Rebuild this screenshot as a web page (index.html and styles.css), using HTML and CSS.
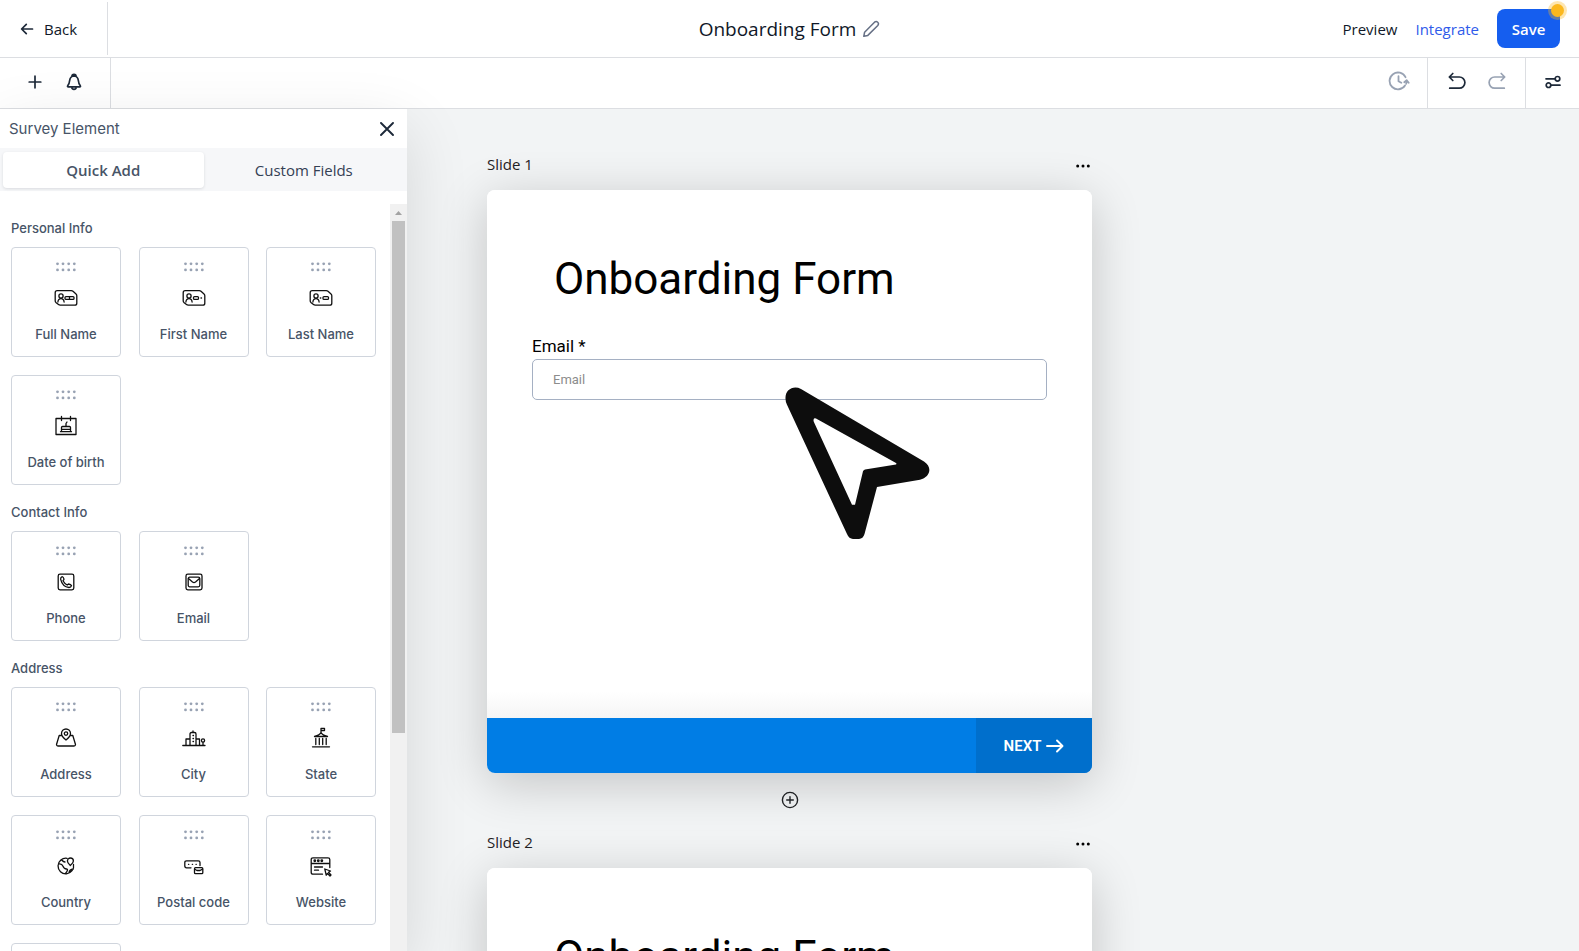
FILE: index.html
```html
<!DOCTYPE html>
<html lang="en">
<head>
<meta charset="utf-8">
<meta name="viewport" content="width=device-width, initial-scale=1">
<title>Onboarding Form</title>
<link rel="stylesheet" href="styles.css">
</head>
<body>
<svg class="sprite" aria-hidden="true">
  <symbol id="grip" viewBox="0 0 20 10">
    <g fill="#98a2b3"><circle cx="1.5" cy="1.8" r="1.4"/><circle cx="7" cy="1.8" r="1.4"/><circle cx="12.7" cy="1.8" r="1.4"/><circle cx="18.3" cy="1.8" r="1.4"/><circle cx="1.5" cy="7.9" r="1.4"/><circle cx="7" cy="7.9" r="1.4"/><circle cx="12.7" cy="7.9" r="1.4"/><circle cx="18.3" cy="7.9" r="1.4"/></g>
  </symbol>
  <symbol id="dots" viewBox="0 0 14 4">
    <circle cx="1.7" cy="2" r="1.5"/><circle cx="7" cy="2" r="1.5"/><circle cx="12.3" cy="2" r="1.5"/>
  </symbol>
  <symbol id="card-person" viewBox="0 0 24 24">
    <path d="M3.2 4.7H17.3Q18.3 4.7 19 5.3L22 8Q22.8 8.700 22.8 9.700V17.200Q22.800 19.200 20.800 19.200H6.200Q5.200 19.200 4.500 18.600L1.900 16.400Q1.200 15.700 1.200 14.700V6.700Q1.200 4.700 3.200 4.700Z"/>
    <circle cx="7" cy="10" r="2.100"/><path d="M3.900 16Q4.200 12.600 7 12.600T10.100 16"/>
  </symbol>
</svg>

<header class="topbar">
  <div class="topbar-left">
    <button class="back" type="button">
      <svg width="14" height="14" viewBox="0 0 14 14" class="line"><path d="M12.500 7H1.800M6.300 2.300 1.600 7l4.700 4.700"/></svg>
      Back
    </button>
  </div>
  <div class="title">
    <h1>Onboarding Form</h1>
    <button class="icon-btn" type="button" aria-label="Rename">
      <svg width="18" height="18" viewBox="0 0 18 18" fill="none" stroke="#667085" stroke-width="1.500" stroke-linejoin="round"><path d="M1.800 16.300 2.600 12.200 12.500 2.200Q14.200.9 15.700 2.200T15.800 5.500L5.800 15.400Z"/></svg>
    </button>
  </div>
  <div class="topbar-right">
    <button class="text-btn" type="button">Preview</button>
    <button class="text-btn text-btn-blue" type="button">Integrate</button>
    <button class="save" type="button">Save<span class="save-dot"></span></button>
  </div>
</header>

<nav class="toolbar" aria-label="Tools">
  <div class="tools-left">
    <button class="icon-btn" type="button" aria-label="Add">
      <svg width="14" height="14" viewBox="0 0 14 14" class="line"><path d="M7 1.200v11.600M1.200 7h11.600"/></svg>
    </button>
    <button class="icon-btn" type="button" aria-label="Notifications">
      <svg width="16" height="18" viewBox="0 0 16 18" class="line"><path d="M5.900 3.500Q5.900 1.300 8 1.300T10.100 3.500M8 3Q4.200 3.200 3.700 7.300 3.400 10.700 1.700 12.800 1.200 13.900 2.300 13.900H13.700Q14.800 13.900 14.300 12.800 12.600 10.700 12.300 7.300 11.800 3.200 8 3ZM6 15.300Q8 17.300 10 15.300"/></svg>
    </button>
  </div>
  <div class="tools-right">
    <div class="tool-group history">
      <button class="icon-btn" type="button" aria-label="Version history">
        <svg width="22" height="20" viewBox="0 0 22 20" fill="none" stroke="#98a2b3" stroke-width="1.800" stroke-linecap="round" stroke-linejoin="round"><path d="M17.500 6.200A8.400 8.400 0 1 0 17 14.500M10.500 5.200V10.200L13.300 11.800M16.300 11.200 18.700 9.200 20.700 11.700M18.700 9.500Q18.700 11.500 18.200 12.800"/></svg>
      </button>
    </div>
    <div class="tool-group undo">
      <button class="icon-btn" type="button" aria-label="Undo">
        <svg width="18" height="18" viewBox="0 0 18 18" class="line"><path d="M4.800 1.500 1.300 5l3.500 3.500M1.500 5H11.300A5.600 5.600 0 0 1 11.300 16.200H1.700"/></svg>
      </button>
      <button class="icon-btn" type="button" aria-label="Redo">
        <svg width="18" height="18" viewBox="0 0 18 18" class="line muted"><path d="M13.200 1.500 16.700 5l-3.500 3.500M16.500 5H6.700A5.600 5.600 0 0 0 6.700 16.200H16.300"/></svg>
      </button>
    </div>
    <div class="tool-group settings">
      <button class="icon-btn" type="button" aria-label="Settings">
        <svg width="16" height="14" viewBox="0 0 16 14" class="line"><path d="M1 3.800H10M6 10.200H15"/><circle cx="12.500" cy="3.800" r="2.300"/><circle cx="3.500" cy="10.200" r="2.300"/></svg>
      </button>
    </div>
  </div>
</nav>

<main class="workspace">
  <section class="canvas">
    <article class="slide">
      <header class="slide-head">
        <h2>Slide 1</h2>
        <button class="icon-btn" type="button" aria-label="Slide 1 options"><svg width="14" height="4"><use href="#dots"/></svg></button>
      </header>
      <div class="slide-card">
        <div class="slide-body">
          <h3>Onboarding Form</h3>
          <div class="field">
            <label for="email1">Email *</label>
            <input id="email1" type="email" placeholder="Email">
          </div>
          <svg class="pointer" width="146" height="153" viewBox="0 0 146 156" preserveAspectRatio="none" aria-hidden="true"><path fill="#0d0d0d" fill-rule="evenodd" d="M0.500 12C0 3 8 -2 16 2L139 76C148 82 145 92 135 94.500L92 102L79.500 150Q78 155 74 155H68Q64 155 62 150L2 18Q.5 15 .5 12ZM29 32Q28 34 29 36L67 120H70L78 86Q78.500 84.500 80 84L111 79Q112 78.500 111 77.500L31 32Q30 31.500 29 32Z"/></svg>
        </div>
        <footer class="slide-foot">
          <button class="next" type="button">NEXT
            <svg width="18" height="14" viewBox="0 0 18 14"><path d="M1 7H16M11 1.500 16.500 7 11 12.500" fill="none" stroke="#fff" stroke-width="1.900" stroke-linecap="round" stroke-linejoin="round"/></svg>
          </button>
        </footer>
      </div>
      <div class="add-slide">
        <button class="icon-btn" type="button" aria-label="Add slide">
          <svg width="18" height="18" viewBox="0 0 18 18" fill="none" stroke="#1f2124" stroke-width="1.400" stroke-linecap="round"><circle cx="9" cy="9" r="7.600"/><path d="M9 5.700v6.600M5.700 9h6.600"/></svg>
        </button>
      </div>
    </article>
    <article class="slide">
      <header class="slide-head">
        <h2>Slide 2</h2>
        <button class="icon-btn" type="button" aria-label="Slide 2 options"><svg width="14" height="4"><use href="#dots"/></svg></button>
      </header>
      <div class="slide-card">
        <div class="slide-body">
          <h3>Onboarding Form</h3>
        </div>
      </div>
    </article>
  </section>

  <aside class="panel">
    <header class="panel-head">
      <h2>Survey Element</h2>
      <button class="icon-btn" type="button" aria-label="Close">
        <svg width="14" height="14" viewBox="0 0 14 14" fill="none" stroke="#1d2939" stroke-width="1.900" stroke-linecap="round"><path d="M1 1l12 12M13 1 1 13"/></svg>
      </button>
    </header>
    <div class="tabs" role="tablist">
      <button class="tab tab-active" type="button" role="tab" aria-selected="true">Quick Add</button>
      <button class="tab" type="button" role="tab" aria-selected="false">Custom Fields</button>
    </div>
    <div class="panel-body">
      <div class="groups">
        <section class="group">
          <h3>Personal Info</h3>
          <div class="tiles">
            <button class="tile" type="button"><svg class="grip"><use href="#grip"/></svg>
              <svg class="glyph" viewBox="0 0 24 24"><use href="#card-person"/><rect x="11" y="10.600" width="9" height="2.800" rx="1"/><path d="M15.500 10.600v2.800"/></svg>Full Name</button>
            <button class="tile" type="button"><svg class="grip"><use href="#grip"/></svg>
              <svg class="glyph" viewBox="0 0 24 24"><use href="#card-person"/><rect x="11.500" y="10.600" width="5" height="2.800" rx="1"/><path d="M19 12h.5"/></svg>First Name</button>
            <button class="tile" type="button"><svg class="grip"><use href="#grip"/></svg>
              <svg class="glyph" viewBox="0 0 24 24"><use href="#card-person"/><rect x="14" y="10.600" width="5.500" height="2.800" rx="1"/><path d="M11.300 12h.5"/></svg>Last Name</button>
            <button class="tile" type="button"><svg class="grip"><use href="#grip"/></svg>
              <svg class="glyph" viewBox="0 0 24 24"><path d="M2 4.500H22V20.500H2ZM7.500 2.500V6.500M16.500 2.500V6.500M12 12V9.500L13 8M7.500 17.500V13.500Q7.500 12.500 8.500 12.500H15.500Q16.500 12.500 16.500 13.500V17.500M6.500 17.700H17.500M8 15.300H16"/></svg>Date of birth</button>
          </div>
        </section>
        <section class="group">
          <h3>Contact Info</h3>
          <div class="tiles">
            <button class="tile" type="button"><svg class="grip"><use href="#grip"/></svg>
              <svg class="glyph" viewBox="0 0 24 24"><rect x="4.200" y="4.200" width="15.600" height="15.600" rx="1.800"/><path d="M8.200 6.600Q9.400 6.800 10 9.200 9.900 10 9 10.700 10.500 13.600 13.200 15L14.500 14Q16.800 14.300 17.500 15.600 17 17.500 15 17.500 8.500 17 6.600 9.200 6.500 7.200 8.200 6.600Z"/></svg>Phone</button>
            <button class="tile" type="button"><svg class="grip"><use href="#grip"/></svg>
              <svg class="glyph" viewBox="0 0 24 24"><rect x="4" y="4.200" width="16" height="15.600" rx="1.800"/><rect x="6.200" y="7.200" width="11.600" height="9.600" rx="1.500"/><path d="M6.500 8.500 10.500 12Q12 13.200 13.500 12L17.500 8.500"/></svg>Email</button>
          </div>
        </section>
        <section class="group">
          <h3>Address</h3>
          <div class="tiles">
            <button class="tile" type="button"><svg class="grip"><use href="#grip"/></svg>
              <svg class="glyph" viewBox="0 0 24 24"><path d="M12 14Q7.500 10.500 7.500 7.500A4.500 4.500 0 0 1 16.500 7.500Q16.500 10.500 12 14ZM7.500 9.500H5.200L2.500 18.500Q2.500 20 4 20H20Q21.500 20 21.500 18.500L18.800 9.500H16.500"/><circle cx="12" cy="7.600" r="1.700"/></svg>Address</button>
            <button class="tile" type="button"><svg class="grip"><use href="#grip"/></svg>
              <svg class="glyph" viewBox="0 0 24 24"><path d="M.800 19.500H23M4 19.500V13H8M8 19.500V8Q8 6.500 9.500 6.500H12.500Q14 6.500 14 8V19.500M11 6V5M14 13H17.500V19.500M21 19V16.500M11 9.500h.5M11 12.500h.5M11 15.500h.5"/><circle cx="21" cy="14.500" r="1.600"/></svg>City</button>
            <button class="tile" type="button"><svg class="grip"><use href="#grip"/></svg>
              <svg class="glyph" viewBox="0 0 24 24"><path d="M3.500 20.800H20.500M5.500 10.500Q11 9 12 6.500 13 9 18.500 10.500ZM12 6.500V2.300H15.500V4.500H12M6.800 12.500V18.500M10.300 12.500V18.500M13.700 12.500V18.500M17.200 12.500V18.500"/></svg>State</button>
            <button class="tile" type="button"><svg class="grip"><use href="#grip"/></svg>
              <svg class="glyph" viewBox="0 0 24 24"><path d="M13 4.300A7.800 7.800 0 1 0 19.500 10.500M4.500 10Q8 9.500 9 12.200T12.500 15 11.500 19.500M7.500 5.700Q9.500 8 11 8M19.300 15Q15.500 15.500 15 18.700M16.300 11.500Q13.400 9 13.400 7A3 3 0 0 1 19.400 7Q19.400 9 16.300 11.500Z"/></svg>Country</button>
            <button class="tile" type="button"><svg class="grip"><use href="#grip"/></svg>
              <svg class="glyph" viewBox="0 0 24 24"><path d="M9 13.800H4.500Q2.800 13.800 2.800 12V8.500Q2.800 6.800 4.500 6.800H16.300Q18 6.800 18 8.500V11.500M6.500 10.300h.3M10.300 10.300h.3M14 10.300h.3"/><rect x="12.500" y="13.700" width="8.300" height="6" rx="1"/><path d="M12.800 15.200 15 16.500H18L20.500 15.200"/></svg>Postal code</button>
            <button class="tile" type="button"><svg class="grip"><use href="#grip"/></svg>
              <svg class="glyph" viewBox="0 0 24 24"><path d="M13.500 20.200H4Q2.200 20.200 2.200 18.400V5.600Q2.200 3.800 4 3.800H19Q20.800 3.800 20.800 5.600V13.500M2.200 9.500H20.800M5.500 13H13.500M5.500 16.200H9.500M15.800 15 21.500 17 19.500 18.300 22 21 21 22 18.500 19.500 17.200 21.200Z"/><circle cx="5.800" cy="6.700" r=".8"/><circle cx="9.300" cy="6.700" r=".8"/><circle cx="12.800" cy="6.700" r=".8"/></svg>Website</button>
            <button class="tile" type="button" aria-label="More"></button>
          </div>
        </section>
      </div>
      <div class="scrollbar" aria-hidden="true">
        <svg width="17" height="17" viewBox="0 0 17 17"><path d="M5 11 8.500 7 12 11Z" fill="#a3a3a3"/></svg>
        <div class="thumb"></div>
      </div>
    </div>
  </aside>
</main>
</body>
</html>
```
FILE: styles.css
```css
* { box-sizing: border-box; }

body {
  margin: 0;
  height: 100vh;
  overflow: hidden;
  display: flex;
  flex-direction: column;
  background: #f2f4f5;
  color: #101828;
  font-family: "Open Sans", "Noto Sans", sans-serif;
  font-size: 15px;
}

h1, h2, h3 { margin: 0; font-weight: 400; }
svg { display: block; flex: none; }
.sprite { position: absolute; width: 0; height: 0; }

button {
  font: inherit;
  color: inherit;
  border: 0;
  padding: 0;
  background: none;
}

.line {
  fill: none;
  stroke: #1d2939;
  stroke-width: 1.7;
  stroke-linecap: round;
  stroke-linejoin: round;
}
.muted { stroke: #98a2b3; }
.icon-btn { display: flex; align-items: center; justify-content: center; }

/* Top bar */
.topbar {
  flex: none;
  height: 58px;
  display: grid;
  grid-template-columns: 1fr auto 1fr;
  align-items: center;
  background: #fff;
  border-bottom: 1px solid #dcdee2;
}
.topbar-left {
  justify-self: start;
  width: 108px;
  height: 53px;
  padding-left: 20px;
  display: flex;
  align-items: center;
  border-right: 1px solid #dcdee2;
}
.back { display: flex; align-items: center; gap: 10px; font-weight: 500; }
.title { display: flex; align-items: center; gap: 6px; }
.title h1 { font-size: 19px; }
.topbar-right {
  justify-self: end;
  display: flex;
  align-items: center;
  padding-right: 19px;
  gap: 18px;
}
.text-btn { font-weight: 500; }
.text-btn-blue { color: #2f5bea; }
.save {
  position: relative;
  width: 63px;
  height: 39px;
  border-radius: 8px;
  background: #155eef;
  color: #fff;
  font-weight: 600;
}
.save-dot {
  position: absolute;
  top: -5px;
  right: -4px;
  width: 13px;
  height: 13px;
  border-radius: 50%;
  background: #fbb81f;
  box-shadow: 0 0 0 3px rgba(251, 184, 31, .35);
}

/* Toolbar */
.toolbar {
  flex: none;
  height: 51px;
  display: flex;
  justify-content: space-between;
  background: #fff;
  border-bottom: 1px solid #dcdee2;
}
.tools-left {
  width: 111px;
  padding: 0 28px 2px;
  display: flex;
  align-items: center;
  gap: 24px;
  border-right: 1px solid #dcdee2;
}
.tools-right { display: flex; }
.tool-group { display: flex; align-items: center; padding-bottom: 4px; }
.tool-group + .tool-group { border-left: 1px solid #dcdee2; }
.history { padding-right: 17px; }
.undo { gap: 22px; padding-left: 20px; padding-right: 19px; }
.settings { padding: 0 18px 2px 19px; }

/* Workspace: the panel floats over the left of the canvas */
.workspace {
  flex: 1;
  min-height: 0;
  display: grid;
  grid-template: minmax(0, 1fr) / minmax(0, 1fr);
}
.canvas, .panel { grid-area: 1 / 1; }

.canvas {
  overflow: hidden;
  display: flex;
  flex-direction: column;
  align-items: center;
  padding-top: 43px;
}
.slide { flex: none; width: 605px; }
.slide-head {
  height: 24px;
  display: flex;
  align-items: center;
  justify-content: space-between;
  padding-right: 2px;
}
.slide-head h2 { font-size: 15px; font-weight: 500; color: #1f2124; }
.slide-head .icon-btn { padding-top: 3px; }
.slide-card {
  margin-top: 14px;
  border-radius: 8px;
  background: #fff;
  box-shadow: 0 10px 50px rgba(0, 0, 0, .2);
  overflow: hidden;
}
.slide-body {
  position: relative;
  height: 528px;
  padding: 62px 45px 0;
  background: linear-gradient(#fff 95%, #f5f5f5);
}
.slide-body h3 {
  padding-left: 22px;
  font: 400 44px/54px Roboto, sans-serif;
  color: #000;
}
.field { margin-top: 28px; display: flex; flex-direction: column; }
.field label { font: 400 17px/25px Roboto, sans-serif; color: #000; }
.field input {
  height: 41px;
  padding: 0 20px;
  border: 1px solid #a5b0c3;
  border-radius: 5px;
  font: 400 13px/20px Roboto, sans-serif;
  background: #fff;
}
.field input::placeholder { color: #8c8c8c; }
.pointer { position: absolute; left: 298px; top: 197px; }
.slide-foot { display: flex; justify-content: flex-end; background: #007de5; }
.next {
  width: 116px;
  height: 55px;
  display: flex;
  align-items: center;
  justify-content: center;
  gap: 5px;
  background: #006fcc;
  color: #fff;
  font: 600 15px/20px Roboto, sans-serif;
}
.add-slide {
  height: 57px;
  padding-bottom: 4px;
  display: flex;
  align-items: center;
  justify-content: center;
}

/* Panel */
.panel {
  z-index: 1;
  width: 407px;
  display: flex;
  flex-direction: column;
  background: #fff;
  box-shadow: 0 20px 60px rgba(0, 0, 0, .12);
  font-family: Inter, sans-serif;
  color: #475467;
}
.panel-head {
  flex: none;
  height: 39px;
  display: flex;
  align-items: center;
  justify-content: space-between;
  padding: 0 13px 0 9px;
}
.panel-head h2 { font-size: 15px; }
.tabs {
  flex: none;
  display: grid;
  grid-template-columns: 1fr 1fr;
  padding: 4px 3px 3px;
  background: #f6f7f9;
}
.tab {
  height: 36px;
  border-radius: 4px;
  color: #344054;
  font: 400 15px/20px "Open Sans", sans-serif;
}
.tab-active {
  background: #fff;
  font-weight: 600;
  color: #475467;
  box-shadow: 0 1px 3px rgba(16, 24, 40, .12);
}
.panel-body {
  flex: 1;
  min-height: 0;
  margin-top: 13px;
  display: flex;
  justify-content: space-between;
  overflow: hidden;
}
.groups {
  width: 376px;
  padding: 15px 0 0 11px;
  display: flex;
  flex-direction: column;
  gap: 18px;
}
.group h3 {
  margin-bottom: 10px;
  font-size: 13px;
  line-height: 18px;
  font-weight: 500;
}
.tiles {
  display: grid;
  grid-template-columns: repeat(3, 110px);
  justify-content: space-between;
  row-gap: 18px;
}
.tile {
  height: 110px;
  padding-top: 14px;
  display: flex;
  flex-direction: column;
  align-items: center;
  border: 1px solid #d0d5dd;
  border-radius: 4px;
  font-size: 13px;
  line-height: 18px;
  font-weight: 500;
}
.grip { width: 20px; height: 10px; }
.glyph {
  width: 24px;
  height: 24px;
  margin: 14px 0 15px;
  fill: none;
  stroke: #101010;
  stroke-width: 1.3;
  stroke-linecap: round;
  stroke-linejoin: round;
}
.scrollbar { width: 17px; background: #f1f1f1; }
.thumb { height: 68.5%; margin: 0 2px; background: #c1c1c1; }
```
